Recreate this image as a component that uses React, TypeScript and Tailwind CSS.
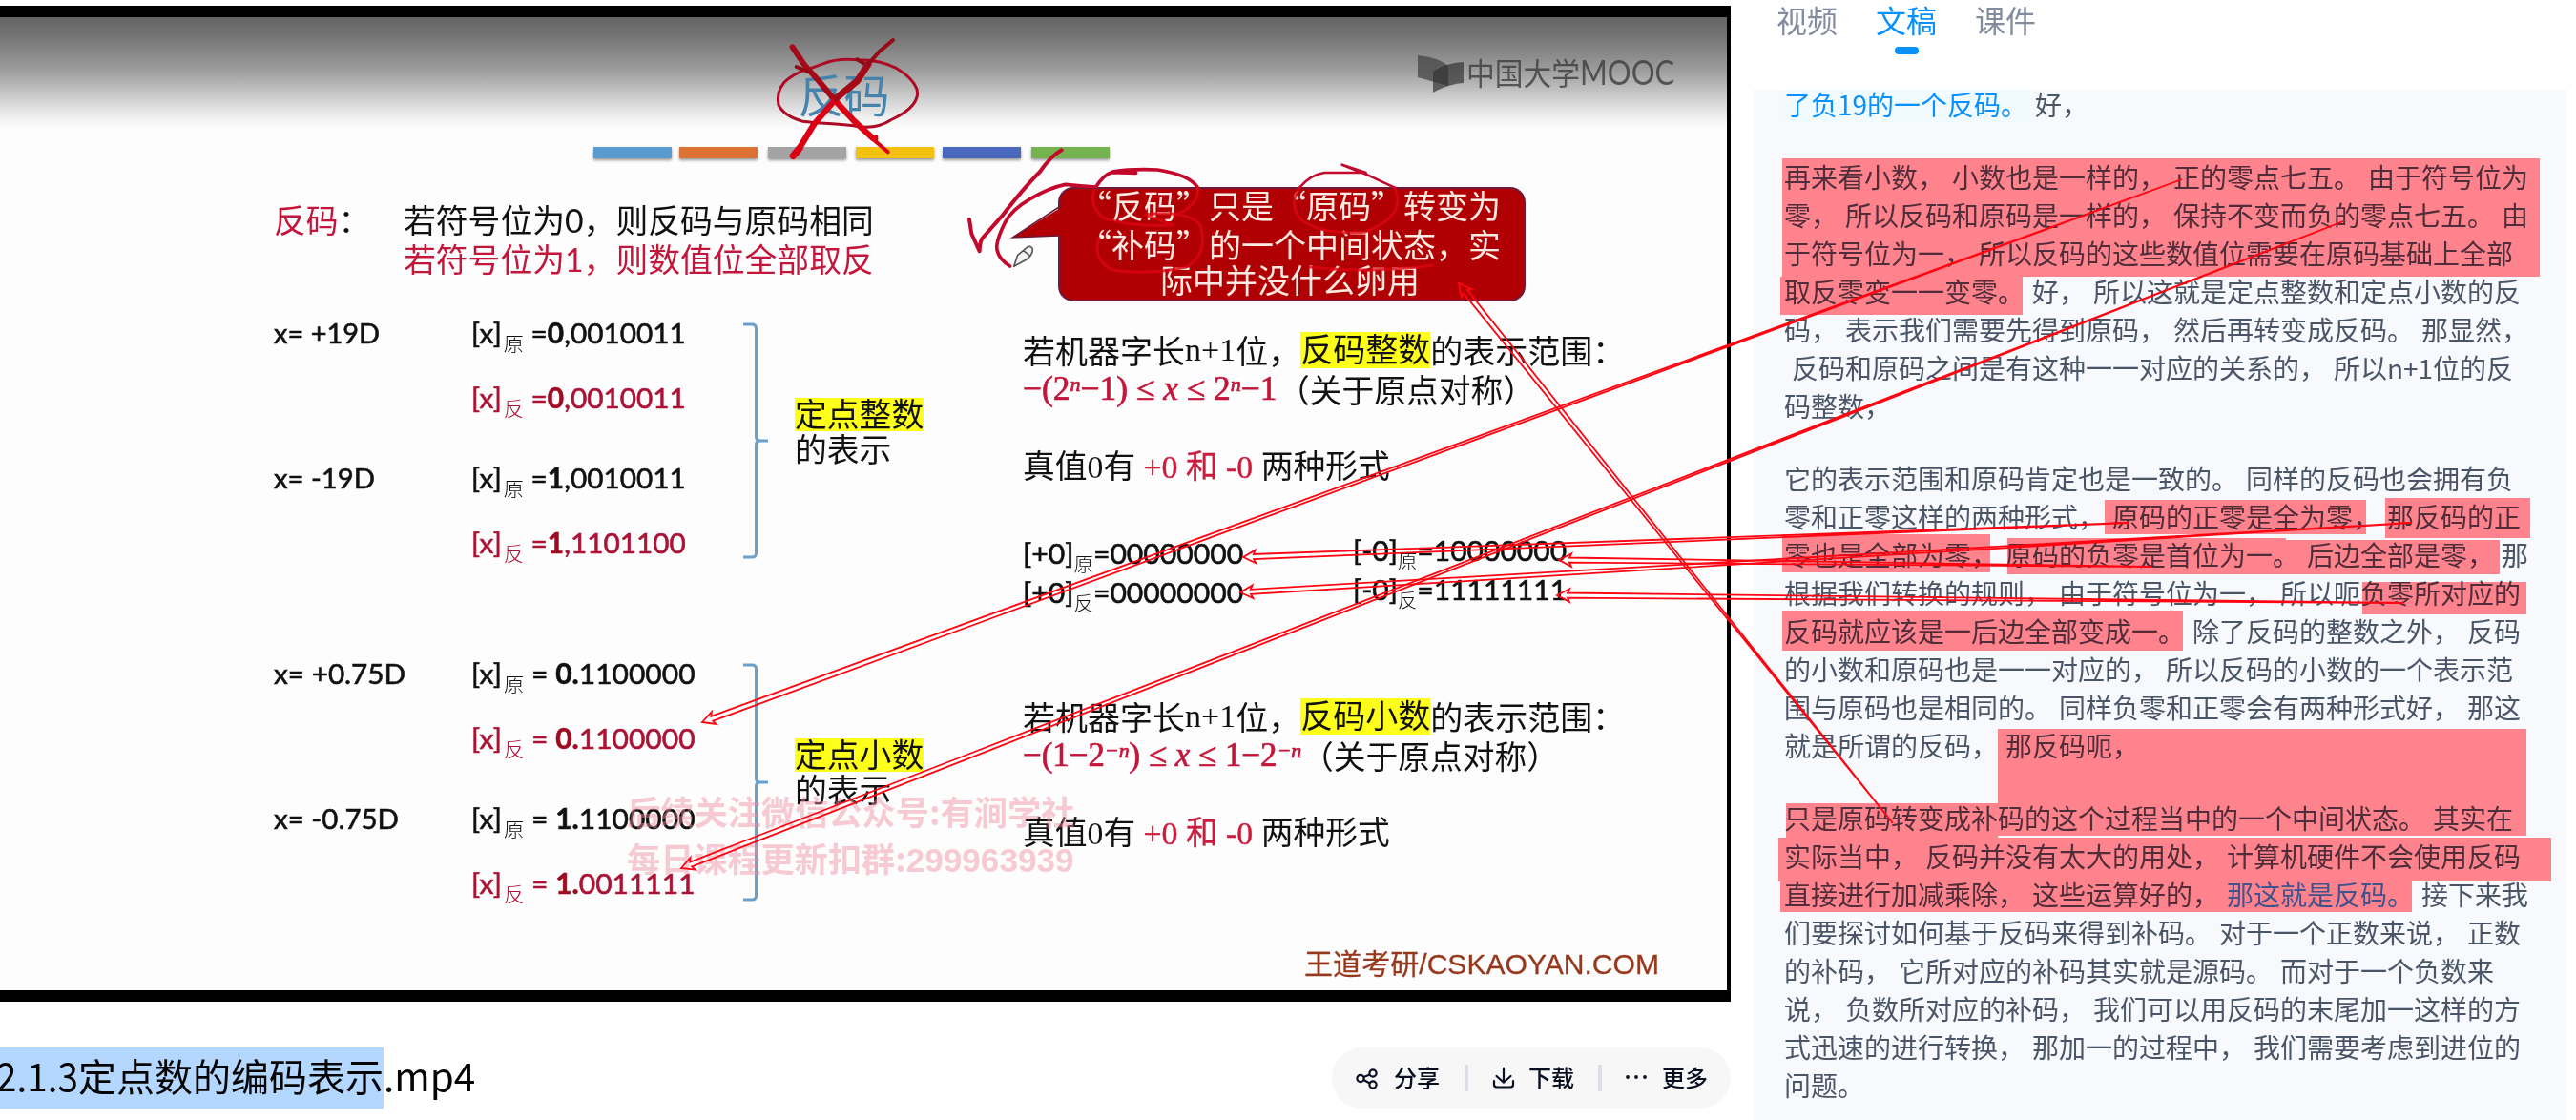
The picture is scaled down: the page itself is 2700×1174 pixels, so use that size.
import { useLayoutEffect, useRef, useState, type ReactNode } from "react";

/** Keeps a run of text at a fixed width by scaling it horizontally. */
function Fit({ w, className = "", children }: { w: number; className?: string; children: ReactNode }) {
  const ref = useRef<HTMLSpanElement>(null);
  const [scale, setScale] = useState(1);
  useLayoutEffect(() => {
    if (ref.current && ref.current.offsetWidth) setScale(w / ref.current.offsetWidth);
  }, [w]);
  return (
    <span className={"block whitespace-pre " + className} style={{ width: w }}>
      <span ref={ref} className="inline-block origin-left" style={{ transform: `scaleX(${scale})` }}>
        {children}
      </span>
    </span>
  );
}

const BARS = [
  "bg-[#5b9bcd]",
  "bg-[#dc7234] ml-[8px]",
  "bg-[#a3a3a3] ml-[11px]",
  "bg-[#f5c110] ml-[10px]",
  "bg-[#4a68bc] ml-[9px]",
  "bg-[#74b34d] ml-[11px]",
];

function Code({ sub, lead, rest, eq, w, red }: { sub: string; lead: string; rest: string; eq: string; w: number; red?: boolean }) {
  return (
    <Fit w={w} className={"-ml-[2px] " + (red ? "text-[#ab1335]" : "text-[#111]")}>
      [x]
      <span className="relative top-[8px] ml-[2px] font-['Noto_Sans_CJK_SC',sans-serif] text-[21px] font-light [-webkit-text-stroke:0]">{sub}</span>
      {eq}
      <b className={red ? "text-[#a00a22]" : ""}>{lead}</b>
      {rest}
    </Fit>
  );
}

function Brace({ h }: { h: number }) {
  const m = h / 2;
  return (
    <svg className="mt-2 block" width="28" height={h} fill="none" stroke="#6ba0cb" strokeWidth="3">
      <path d={`M1 2H10Q14.500 2 14.500 6V${m - 4}Q14.500 ${m} 19 ${m}H27M19 ${m}Q14.500 ${m} 14.500 ${m + 4}V${h - 6}Q14.500 ${h - 2} 10 ${h - 2}H1`} />
    </svg>
  );
}

type Row = { label?: string; lw?: number; sub: string; lead: string; rest: string; red?: boolean };

function Group({ rows, eq, w, braceH, kind }: { rows: Row[]; eq: string; w: number; braceH: number; kind: string }) {
  return (
    <div className="flex">
      <div className="w-[491px] font-['Lato','Noto_Sans_CJK_SC',sans-serif] text-[29.5px] leading-[38px] [-webkit-text-stroke:0.6px]">
        {rows.map((r, i) => (
          <div key={i} className={"flex h-[40px] " + (i === 2 ? "mt-[44px]" : i ? "mt-[28px]" : "")}>
            <div className="w-[209px] shrink-0 text-[#111]">{r.label && <Fit w={r.lw ?? 110}>{r.label}</Fit>}</div>
            <Code sub={r.sub} lead={r.lead} rest={r.rest} eq={eq} w={w} red={r.red} />
          </div>
        ))}
      </div>
      <Brace h={braceH} />
      <div className="mt-[87px] ml-[27px] text-[33.8px] text-[#111]">
        <div className="h-[35px] bg-[#fdff1a] leading-[32px]">{kind}</div>
        <div className="h-[37px] leading-[36px]">的表示</div>
      </div>
    </div>
  );
}

function RangeTitle({ kind }: { kind: string }) {
  return (
    <div className="flex h-[40px] items-center whitespace-pre text-[34px] leading-[34px]">
      若机器字长<span className="font-['Liberation_Serif',serif]">n+1</span>位，
      <span className="h-[38px] bg-[#fdff1a]">{kind}</span>的表示范围：
    </div>
  );
}

function TrueZero() {
  return (
    <div className="mt-[42px] h-[40px] whitespace-pre font-['Liberation_Serif','Noto_Sans_CJK_SC',serif] leading-[40px]">
      真值0有 <span className="text-[#cc1b3c] [-webkit-text-stroke:0.4px]">+0 和 -0</span> 两种形式
    </div>
  );
}

function ZeroRow({ sub, pos, neg }: { sub: string; pos: string; neg: string }) {
  const s = "relative top-[8px] font-['Noto_Sans_CJK_SC',sans-serif] text-[20px] font-light [-webkit-text-stroke:0]";
  return (
    <div className="flex h-[41px] font-['Lato',sans-serif] text-[29.5px] leading-[40px] [-webkit-text-stroke:0.6px]">
      <Fit w={231}>[+0]<span className={s}>{sub}</span>={pos}</Fit>
      <Fit w={224} className="-mt-[3px] ml-[115px]">[-0]<span className={s}>{sub}</span>={neg}</Fit>
    </div>
  );
}

function Sup({ children }: { children: ReactNode }) {
  return <span className="relative -top-[9px] text-[22px] italic">{children}</span>;
}

function Formula({ w, top, children }: { w: number; top: string; children: ReactNode }) {
  return (
    <div className={"flex h-[40px] leading-[40px] " + top}>
      <Fit w={w} className="font-['Liberation_Serif',serif] text-[35px] text-[#c4163b] [-webkit-text-stroke:0.7px]">{children}</Fit>
      （关于原点对称）
    </div>
  );
}

function Scribbles() {
  return (
    <svg className="pointer-events-none absolute top-0 left-0" width="1815" height="340" fill="none" strokeLinecap="round" strokeLinejoin="round">
      <g transform="translate(600 30) scale(.33333)" stroke="#ad0a25">
        <path strokeWidth="9" d="M735 128Q690 145 665 170Q640 200 648 240Q665 275 725 292C780 300 850 298 900 308Q960 315 1000 288Q1050 265 1070 240Q1090 215 1083 190Q1070 155 1020 125Q970 98 900 98Q830 92 790 110L740 128" />
        <path strokeWidth="18" stroke="#a50a18" d="M692 58L730 115L775 165L825 225" />
        <path strokeWidth="12" stroke="#8f0a14" d="M704 120L740 135M895 97L930 118" />
        <path strokeWidth="19" stroke="#dc0014" d="M705 390L760 300L825 225L885 290L945 345" />
        <path strokeWidth="22" stroke="#dc0014" d="M694 400L714 376" />
        <path strokeWidth="12" stroke="#dc0014" d="M930 335L992 388M955 340V355" />
        <path strokeWidth="21" stroke="#a50a18" d="M830 218L895 165L930 112" />
        <path strokeWidth="12" stroke="#960a16" d="M930 112L965 72L1008 36" />
      </g>
      <g transform="translate(1000 150) scale(.33333)" stroke="#c4082c">
        <path strokeWidth="12" d="M338 22Q305 40 270 90Q220 140 150 230L88 300Q80 315 80 340L55 285L48 240" />
        <path strokeWidth="11" d="M445 138Q400 135 350 130Q300 140 240 175Q180 210 160 250Q130 310 135 335Q140 365 176 387" />
        <path strokeWidth="11" d="M448 135Q470 100 495 92L572 94L500 90Q560 80 640 84Q740 100 765 138" />
        <path strokeWidth="8" d="M1088 138Q1120 100 1165 93H1295L1220 68L1300 100L1385 140" />
        <g stroke="#dc0510" strokeWidth="9" opacity=".8">
          <path d="M440 150Q425 200 470 235Q560 265 690 258Q640 240 600 225Q740 210 775 260Q800 350 730 390Q610 415 500 400Q435 370 455 300M765 138Q775 190 700 225" />
          <path d="M1088 138Q1050 190 1090 240Q1160 290 1290 280Q1400 240 1395 170L1385 140M1120 390Q1300 410 1505 385" />
        </g>
        <path fill="#f4f4f4" stroke="#555" strokeWidth="5" d="M188 388L200 352L232 326Q246 322 247 336Q246 352 228 366ZM218 338L236 352" />
      </g>
    </svg>
  );
}

function Slide() {
  return (
    <div className="relative mt-[6px] h-[1044px] w-[1814px] bg-black pt-[12px]">
      <div className="relative h-[1020px] w-[1810px] overflow-hidden bg-[#fdfdfd]">
        <div className="flex h-[136px] justify-center bg-[linear-gradient(to_bottom,#646464_0,#747474_20px,#9c9c9c_55px,#cfcfcf_85px,#f4f4f4_108px,#fdfdfd_118px)]">
          <div className="mt-[55px] ml-[-41px] text-[48px] font-normal leading-[48px] text-[#4684ae]">反码</div>
        </div>
        <div className="flex pl-[622px]">
          {BARS.map((c) => (
            <div key={c} className={"h-[12px] w-[82px] shadow-[0_2px_3px_rgba(0,0,0,0.4)] " + c} />
          ))}
        </div>
        <div className="flex h-[825px] pl-[287px] text-[33.75px] text-[#111]">
          <div className="w-[785px] shrink-0">
            <div className="mt-[44px] flex text-[33.8px] leading-[39px]">
              <div className="w-[136px]"><span className="text-[#c4163b]">反码</span>：</div>
              <div className="whitespace-pre">
                <div>若符号位为<span className="font-['Lato']">0</span>，则反码与原码相同</div>
                <div className="text-[#c4163b]">若符号位为<span className="font-['Lato']">1</span>，则数值位全部取反</div>
              </div>
            </div>
            <div className="mt-[38px]">
              <Group
                kind="定点整数" eq=" =" w={225} braceH={248}
                rows={[
                  { label: "x= +19D", lw: 111, sub: "原", lead: "0", rest: ",0010011" },
                  { sub: "反", lead: "0", rest: ",0010011", red: true },
                  { label: "x= -19D", lw: 106, sub: "原", lead: "1", rest: ",0010011" },
                  { sub: "反", lead: "1", rest: ",1101100", red: true },
                ]}
              />
            </div>
            <div className="mt-[97px]">
              <Group
                kind="定点小数" eq=" = " w={235} braceH={250}
                rows={[
                  { label: "x= +0.75D", lw: 138, sub: "原", lead: "0.", rest: "1100000" },
                  { sub: "反", lead: "0.", rest: "1100000", red: true },
                  { label: "x= -0.75D", lw: 131, sub: "原", lead: "1.", rest: "1100000" },
                  { sub: "反", lead: "1.", rest: "0011111", red: true },
                ]}
              />
            </div>
          </div>
          <div>
            <div className="relative mt-[30px] ml-[37px] h-[120px] w-[490px] rounded-[16px] border-2 border-[#6d1a3c] bg-[#b00003] text-center text-[34px] leading-[40px] text-[#fdeae2]">
              <svg className="absolute top-[14px] -left-[52px]" width="56" height="40">
                <path d="M54 5L2 37L54 35Z" fill="#b00003" />
                <path d="M51 5L2 37L51 35" fill="none" stroke="#6d1a3c" strokeWidth="1.500" />
              </svg>
              <div className="relative -top-[3px] -ml-1">“反码”只是“原码”转变为</div>
              <div className="relative -top-[2px] -ml-1">“补码”的一个中间状态，实</div>
              <div className="relative -top-[4px] -mt-px -ml-1">际中并没什么卵用</div>
            </div>
            <div className="mt-[31px]"><RangeTitle kind="反码整数" /></div>
            <Formula w={267} top="mt-px">
              −(2<Sup>n</Sup>−1) ≤ <i>x</i> ≤ 2<Sup>n</Sup>−1
            </Formula>
            <TrueZero />
            <div className="mt-[50px]">
              <ZeroRow sub="原" pos="00000000" neg="10000000" />
              <ZeroRow sub="反" pos="00000000" neg="11111111" />
            </div>
            <div className="mt-[89px]"><RangeTitle kind="反码小数" /></div>
            <Formula w={292} top="mt-px">
              −(1−2<Sup>−n</Sup>) ≤ <i>x</i> ≤ 1−2<Sup>−n</Sup>
            </Formula>
            <TrueZero />
          </div>
        </div>
        <div className="flex justify-end pr-[71px] text-[29.5px] leading-[35px] text-[#96381c] [-webkit-text-stroke:0.3px]">
          <Fit w={372}>王道考研<span className="font-['Liberation_Sans',sans-serif]">/CSKAOYAN.COM</span></Fit>
        </div>
        <div className="absolute top-[807px] left-[657px] text-[35px] font-bold leading-[49px] text-[#f08ca0]/45">
          <Fit w={469}>后续关注微信公众号:有涧学社</Fit>
          <Fit w={469}>每日课程更新扣群:<span className="font-['Liberation_Sans',sans-serif]">299963939</span></Fit>
        </div>
        <div className="absolute top-[34px] left-[1485px] flex items-center text-[#3c3c3c]/80">
          <svg width="52" height="52" viewBox="0 0 52 52">
            <path d="M1 6Q22 8 33 17V38L1 29Z" fill="#444" fillOpacity=".75" />
            <path d="M17 23Q30 14 49 13V35Q32 36 17 45Z" fill="#333" fillOpacity=".7" />
          </svg>
          <div className="relative -top-[3px] flex">
            <Fit w={119} className="text-[32px] leading-[52px]">中国大学</Fit>
            <Fit w={99} className="font-['Lato',sans-serif] text-[37px] leading-[52px]">MOOC</Fit>
          </div>
        </div>
      </div>
    </div>
  );
}

function Toolbar() {
  const sep = <div className="h-[28px] w-[4px] bg-[#dcdfe8]" />;
  return (
    <div className="flex h-[64px] w-[418px] items-center rounded-full bg-[#f7f7f8] pl-[25px] text-[24px] font-medium leading-[40px] text-[#080f20]">
      <svg width="24" height="24" viewBox="0 0 24 24" fill="none" stroke="currentColor" strokeWidth="2.200">
        <circle cx="5" cy="12.500" r="3.600" /><circle cx="18" cy="7" r="3.600" /><circle cx="18" cy="19" r="3.600" />
        <path d="M8.300 11L14.800 8.500M8.300 14L14.800 17.500" />
      </svg>
      <span className="relative -top-px ml-[16px] w-[48px]">分享</span>
      <div className="ml-[26px]">{sep}</div>
      <svg className="ml-[25px]" width="24" height="24" viewBox="0 0 24 24" fill="none" stroke="currentColor" strokeWidth="2.200" strokeLinecap="round">
        <path d="M12 1.500V16M4.500 10L12 16.500L19.500 10M2 15V19Q2 21.500 5 21.500H19Q22 21.500 22 19V15" />
      </svg>
      <span className="relative -top-px ml-[14px] w-[48px]">下载</span>
      <div className="ml-[25px]">{sep}</div>
      <svg className="ml-[24px]" width="24" height="24" viewBox="0 0 24 24" fill="currentColor">
        <circle cx="3" cy="11" r="1.900" /><circle cx="12" cy="11" r="1.900" /><circle cx="21" cy="11" r="1.900" />
      </svg>
      <span className="relative -top-px ml-[15px]">更多</span>
    </div>
  );
}

const PARAGRAPHS: string[][] = [
  [
    "再来看小数， 小数也是一样的， 正的零点七五。 由于符号位为",
    "零， 所以反码和原码是一样的， 保持不变而负的零点七五。 由",
    "于符号位为一， 所以反码的这些数值位需要在原码基础上全部",
    "取反零变一一变零。 好， 所以这就是定点整数和定点小数的反",
    "码， 表示我们需要先得到原码， 然后再转变成反码。 那显然，",
    " 反码和原码之间是有这种一一对应的关系的， 所以n+1位的反",
    "码整数，",
  ],
  [
    "它的表示范围和原码肯定也是一致的。 同样的反码也会拥有负",
    "零和正零这样的两种形式， 原码的正零是全为零， 那反码的正",
    "零也是全部为零， 原码的负零是首位为一。 后边全部是零， 那",
    "根据我们转换的规则， 由于符号位为一， 所以呃负零所对应的",
    "反码就应该是一后边全部变成一。 除了反码的整数之外， 反码",
    "的小数和原码也是一一对应的， 所以反码的小数的一个表示范",
    "围与原码也是相同的。 同样负零和正零会有两种形式好， 那这",
    "就是所谓的反码， 那反码呃，",
  ],
  [
    "只是原码转变成补码的这个过程当中的一个中间状态。 其实在",
    "实际当中， 反码并没有太大的用处， 计算机硬件不会使用反码",
    "直接进行加减乘除， 这些运算好的， |那这就是反码。| 接下来我",
    "们要探讨如何基于反码来得到补码。 对于一个正数来说， 正数",
    "的补码， 它所对应的补码其实就是源码。 而对于一个负数来",
    "说， 负数所对应的补码， 我们可以用反码的末尾加一这样的方",
    "式迅速的进行转换， 那加一的过程中， 我们需要考虑到进位的",
    "问题。",
  ],
];

function Line({ text }: { text: string }) {
  const parts = text.split("|");
  return (
    <div className="h-[40px]">
      {parts.map((p, i) => (
        <span key={i} className={i === 1 ? "text-[#3a9cff]" : ""}>{p}</span>
      ))}
    </div>
  );
}

function Transcript() {
  return (
    <div className="w-[852px] grow overflow-hidden bg-[#f8f9fd] pl-[32px] text-[28px] leading-[40px] whitespace-pre text-[#4a5568] [word-spacing:1.7px]">
      <div className="-mt-[5px] h-[40px]">
        <span className="-ml-[1px] inline-block h-[40px] bg-[#f0faff] pr-[2px] pl-[1px] text-[#0591ff]">了负19的一个反码。</span>
        <span className="pl-[6px]">好，</span>
      </div>
      {PARAGRAPHS.map((lines, i) => (
        <div key={i} className="mt-[36px]">
          {lines.map((t) => <Line key={t} text={t} />)}
        </div>
      ))}
    </div>
  );
}

const MARKS = [
  [1868, 166, 2662, 290], [1866, 290, 2120, 330], [2206, 524, 2480, 560], [2500, 522, 2652, 564],
  [1868, 560, 2086, 600], [2104, 564, 2396, 566], [2104, 566, 2620, 602], [2476, 610, 2648, 644],
  [1868, 640, 2288, 682], [2094, 764, 2648, 876], [1872, 842, 2094, 878], [1864, 878, 2674, 924],
  [1866, 924, 2528, 956],
];

function MarkLayer({ className }: { className: string }) {
  return (
    <svg className={"pointer-events-none absolute top-0 left-0 " + className} width="2700" height="1174" shapeRendering="crispEdges">
      {MARKS.map(([a, b, c, d]) => <rect key={a + "-" + b} x={a} y={b} width={c - a} height={d - b} />)}
    </svg>
  );
}

const ARROWS = [
  [2287, 188, 736, 757], [2456, 232, 714, 910], [1984, 863, 1529, 297], [2232, 548, 1303, 584],
  [2528, 548, 1300, 621], [2255, 594, 1634, 587], [2519, 632, 1632, 624],
];

/** Outlined arrow whose shaft narrows to a point at its tail. */
function arrowPath([tx, ty, hx, hy]: number[]) {
  const len = Math.hypot(tx - hx, ty - hy);
  const ux = (tx - hx) / len;
  const uy = (ty - hy) / len;
  const at = (d: number, s: number) => `${(hx + ux * d - uy * s).toFixed(1)} ${(hy + uy * d + ux * s).toFixed(1)}`;
  return `M${tx} ${ty}L${at(11, 2.6)}L${at(13, 6.8)}L${at(0, 0)}L${at(13, -6.8)}L${at(11, -2.6)}Z`;
}

export default function App() {
  return (
    <div className="relative flex h-[1174px] w-[2700px] overflow-hidden bg-white font-['Noto_Sans_CJK_SC',sans-serif]">
      <div className="w-[1838px] shrink-0">
        <Slide />
        <div className="mt-[48px] flex h-[64px] w-[1814px] items-center justify-between">
          <div className="flex h-[64px] text-[40px] leading-[59px] text-[#050505]">
            <div className="flex w-[402px] bg-[#b3d7ff]">
              <Fit w={86} className="-ml-[4px] shrink-0">2.1.3</Fit>
              <span className="whitespace-nowrap">定点数的编码表示</span>
            </div>
            <Fit w={96}>.mp4</Fit>
          </div>
          <Toolbar />
        </div>
      </div>
      <div className="flex flex-col">
        <div className="flex h-[94px] shrink-0 gap-[40px] pl-[24px] text-[32px] leading-[41px] text-[#838c9f]">
          <div>视频</div>
          <div className="flex flex-col items-center text-[#0591ff]">
            文稿
            <div className="mt-[8px] h-[8px] w-[25px] rounded-full bg-[#0591ff]" />
          </div>
          <div>课件</div>
        </div>
        <Transcript />
      </div>
      <Scribbles />
      <MarkLayer className="fill-[#ff868d] mix-blend-multiply" />
      <MarkLayer className="fill-[#070000] mix-blend-plus-lighter" />
      <svg className="pointer-events-none absolute top-0 left-0" width="2700" height="1174" fill="none" stroke="#ff0512" strokeWidth="1.800">
        {ARROWS.map((a) => <path key={a.join()} d={arrowPath(a)} />)}
      </svg>
    </div>
  );
}
